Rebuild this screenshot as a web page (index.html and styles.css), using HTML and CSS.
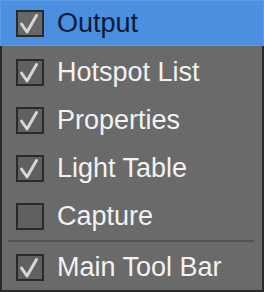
FILE: index.html
```html
<!DOCTYPE html>
<html>
<head>
<meta charset="utf-8">
<link rel="stylesheet" href="styles.css">
</head>
<body>
<div class="menu">
  <div class="item active"><span class="box"><svg viewBox="0 0 24 23"><path d="M3.5 12 L9 20 L18.5 3.5"/></svg></span><span class="label">Output</span></div>
  <div class="item"><span class="box"><svg viewBox="0 0 24 23"><path d="M3.5 12 L9 20 L18.5 3.5"/></svg></span><span class="label">Hotspot List</span></div>
  <div class="item"><span class="box"><svg viewBox="0 0 24 23"><path d="M3.5 12 L9 20 L18.5 3.5"/></svg></span><span class="label">Properties</span></div>
  <div class="item"><span class="box"><svg viewBox="0 0 24 23"><path d="M3.5 12 L9 20 L18.5 3.5"/></svg></span><span class="label">Light Table</span></div>
  <div class="item"><span class="box"></span><span class="label">Capture</span></div>
  <div class="sep"></div>
  <div class="item last"><span class="box"><svg viewBox="0 0 24 23"><path d="M3.5 12 L9 20 L18.5 3.5"/></svg></span><span class="label">Main Tool Bar</span></div>
</div>
</body>
</html>
```
FILE: styles.css
```css
html, body {
  margin: 0;
  padding: 0;
  background: #2a2a2a;
}
.menu {
  box-sizing: border-box;
  background: #6a6a6a;
  border-left: 2px solid #2b2b2b;
  border-right: 2px solid #2b2b2b;
  border-bottom: 2px solid #2b2b2b;
  width: 264px;
  height: 292px;
  font-family: "Liberation Sans", Arial, sans-serif;
  font-size: 27px;
  color: #f2f2f2;
  display: flex;
  flex-direction: column;
}
.item {
  height: 48px;
  display: flex;
  align-items: center;
  padding-left: 14px;
}
.item.active {
  height: 46px;
  margin: 0 -2px 2px -2px;
  padding-left: 16px;
  background: #4a8fe0;
  box-shadow: inset 0 0 0 1px #5a9ce6;
  color: #0b1a36;
}
.item.last {
  height: 46px;
}
.box {
  width: 28px;
  height: 27px;
  box-sizing: border-box;
  border: 2px solid #2a2a2a;
  background: #606060;
  display: flex;
  flex: none;
}
.active .box {
  background: #676767;
}
.box svg {
  width: 24px;
  height: 23px;
  fill: none;
  stroke: #d6d6d6;
  stroke-width: 3;
  stroke-linecap: round;
  stroke-linejoin: round;
}
.label {
  margin-left: 13px;
}
.sep {
  height: 4px;
  margin: 0 8px 0 6px;
  border-top: 2px solid #525252;
  box-sizing: border-box;
}
```
